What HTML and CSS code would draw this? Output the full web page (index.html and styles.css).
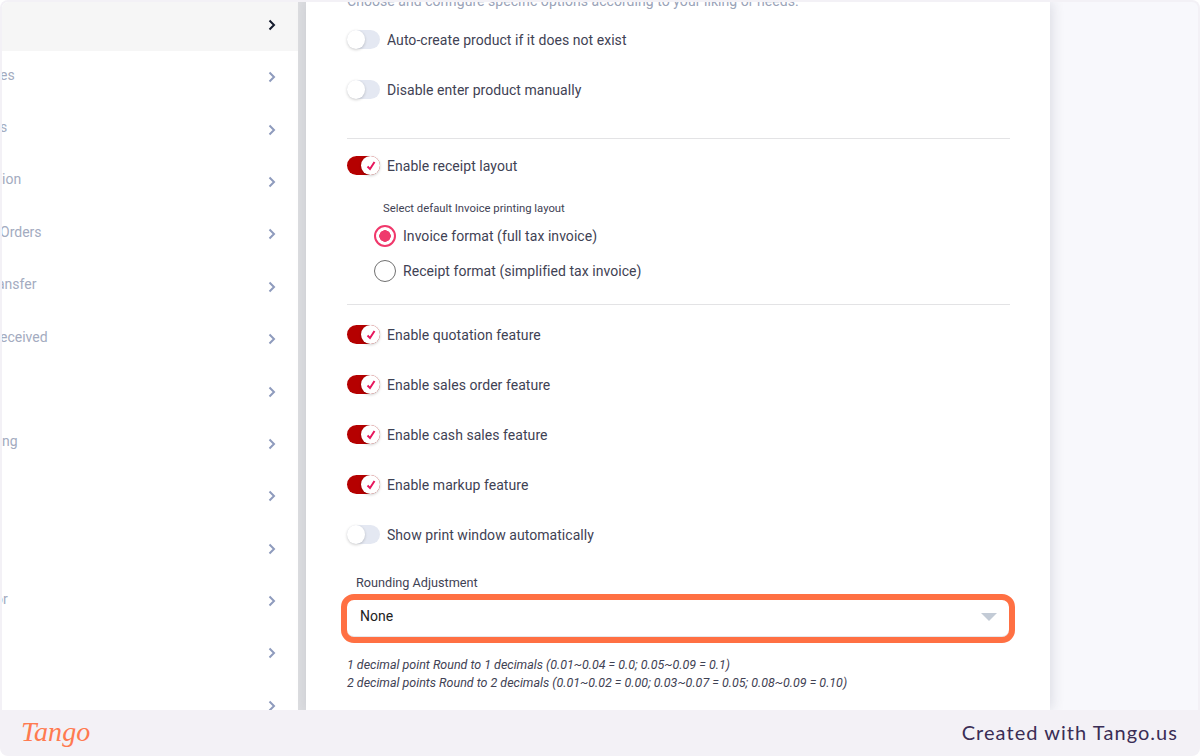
FILE: index.html
```html
<!DOCTYPE html>
<html lang="en">
<head>
<meta charset="utf-8">
<title>Settings</title>
<link rel="stylesheet" href="styles.css">
</head>
<body>
<div class="frame">
  <div class="shot">
    <aside class="sidebar">
      <div class="nav-row active"><span class="nav-label"></span><svg class="chev" viewBox="0 0 8 12"><path d="M1.5 1.5 6 6l-4.500 4.500"/></svg></div>
      <div class="nav-row"><span class="nav-label">es</span><svg class="chev" viewBox="0 0 8 12"><path d="M1.5 1.5 6 6l-4.500 4.500"/></svg></div>
      <div class="nav-row"><span class="nav-label">s</span><svg class="chev" viewBox="0 0 8 12"><path d="M1.5 1.5 6 6l-4.500 4.500"/></svg></div>
      <div class="nav-row"><span class="nav-label nudge-right">ion</span><svg class="chev" viewBox="0 0 8 12"><path d="M1.5 1.5 6 6l-4.500 4.500"/></svg></div>
      <div class="nav-row"><span class="nav-label">Orders</span><svg class="chev" viewBox="0 0 8 12"><path d="M1.5 1.5 6 6l-4.500 4.500"/></svg></div>
      <div class="nav-row"><span class="nav-label nudge-left">ansfer</span><svg class="chev" viewBox="0 0 8 12"><path d="M1.5 1.5 6 6l-4.500 4.500"/></svg></div>
      <div class="nav-row"><span class="nav-label">eceived</span><svg class="chev" viewBox="0 0 8 12"><path d="M1.5 1.5 6 6l-4.500 4.500"/></svg></div>
      <div class="nav-row"><span class="nav-label"></span><svg class="chev" viewBox="0 0 8 12"><path d="M1.5 1.5 6 6l-4.500 4.500"/></svg></div>
      <div class="nav-row"><span class="nav-label nudge-right">ng</span><svg class="chev" viewBox="0 0 8 12"><path d="M1.5 1.5 6 6l-4.500 4.500"/></svg></div>
      <div class="nav-row"><span class="nav-label"></span><svg class="chev" viewBox="0 0 8 12"><path d="M1.5 1.5 6 6l-4.500 4.500"/></svg></div>
      <div class="nav-row"><span class="nav-label"></span><svg class="chev" viewBox="0 0 8 12"><path d="M1.5 1.5 6 6l-4.500 4.500"/></svg></div>
      <div class="nav-row"><span class="nav-label nudge-far">or</span><svg class="chev" viewBox="0 0 8 12"><path d="M1.5 1.5 6 6l-4.500 4.500"/></svg></div>
      <div class="nav-row"><span class="nav-label"></span><svg class="chev" viewBox="0 0 8 12"><path d="M1.5 1.5 6 6l-4.500 4.500"/></svg></div>
      <div class="nav-row"><span class="nav-label"></span><svg class="chev" viewBox="0 0 8 12"><path d="M1.5 1.5 6 6l-4.500 4.500"/></svg></div>
    </aside>
    <div class="scrollbar"></div>
    <main class="card">
      <p class="intro">Choose and configure specific options according to your liking or needs.</p>
      <div class="opt first"><span class="toggle"></span><span>Auto-create product if it does not exist</span></div>
      <div class="opt"><span class="toggle"></span><span>Disable enter product manually</span></div>
      <hr class="rule rule-a">
      <div class="opt tight"><span class="toggle on"><span class="knob"><svg viewBox="0 0 12 12"><path d="M2.500 6.500 5 9l4.500-7"/></svg></span></span><span>Enable receipt layout</span></div>
      <div class="sub-label">Select default Invoice printing layout</div>
      <div class="radio-row"><span class="radio on"></span><span>Invoice format (full tax invoice)</span></div>
      <div class="radio-row"><span class="radio"></span><span>Receipt format (simplified tax invoice)</span></div>
      <hr class="rule rule-b">
      <div class="opt tight"><span class="toggle on"><span class="knob"><svg viewBox="0 0 12 12"><path d="M2.500 6.500 5 9l4.500-7"/></svg></span></span><span>Enable quotation feature</span></div>
      <div class="opt"><span class="toggle on"><span class="knob"><svg viewBox="0 0 12 12"><path d="M2.500 6.500 5 9l4.500-7"/></svg></span></span><span>Enable sales order feature</span></div>
      <div class="opt"><span class="toggle on"><span class="knob"><svg viewBox="0 0 12 12"><path d="M2.500 6.500 5 9l4.500-7"/></svg></span></span><span>Enable cash sales feature</span></div>
      <div class="opt"><span class="toggle on"><span class="knob"><svg viewBox="0 0 12 12"><path d="M2.500 6.500 5 9l4.500-7"/></svg></span></span><span>Enable markup feature</span></div>
      <div class="opt"><span class="toggle"></span><span>Show print window automatically</span></div>
      <div class="field-label">Rounding Adjustment</div>
      <div class="select"><span>None</span><span class="caret"></span></div>
      <p class="hint first-hint">1 decimal point Round to 1 decimals (0.01~0.04 = 0.0; 0.05~0.09 = 0.1)</p>
      <p class="hint">2 decimal points Round to 2 decimals (0.01~0.02 = 0.00; 0.03~0.07 = 0.05; 0.08~0.09 = 0.10)</p>
    </main>
    <div class="backdrop"></div>
  </div>
  <footer class="footer">
    <span class="logo">Tango</span>
    <span class="credit">Created with Tango.us</span>
  </footer>
</div>
</body>
</html>
```
FILE: styles.css
```css
* { box-sizing: border-box; }
html, body { margin: 0; height: 100%; background: #fff; overflow: hidden; }
body { font-family: Roboto, "Liberation Sans", sans-serif; font-size: 14px; letter-spacing: .05px; color: #3f4254; }
.frame { width: 1200px; height: 756px; background: #f3f1f6; border-radius: 8px; padding: 2px 2px 0; display: flex; flex-direction: column; overflow: hidden; }
.shot { height: 708px; display: flex; overflow: hidden; background: #f8f8fc; border-radius: 6px 6px 0 0; }

.sidebar { width: 296px; flex: none; background: #fff; overflow: hidden; }
.nav-row { height: 52.4px; display: flex; align-items: center; justify-content: space-between; padding-right: 22px; }
.nav-row.active { background: #f6f6f6; margin-top: -3px; height: 52px; }
.nav-label { color: #a3abc0; font-size: 14px; letter-spacing: 0; margin-bottom: 5px; margin-left: -2px; white-space: nowrap; }
.nudge-right { margin-left: 0; }
.nudge-left { margin-left: -5px; }
.nudge-far { margin-left: -7px; }
.chev { width: 8px; height: 12px; fill: none; stroke: #8e9bbd; stroke-width: 2; }
.active .chev { stroke: #141b2d; }

.scrollbar { width: 8px; flex: none; background: #dcdde0; }

.card { width: 744px; flex: none; background: #fff; padding: 0 40px 0 41px; box-shadow: 2px 0 12px rgba(40, 50, 80, .14); position: relative; overflow: hidden; }
.intro { margin: -8px 0 0; height: 14px; line-height: 14px; font-size: 14px; color: #9aa3b8; white-space: nowrap; }
.opt { height: 19px; margin-top: 31px; display: flex; align-items: center; gap: 7px; white-space: nowrap; }
.opt.first { margin-top: 22px; }
.opt.tight { margin-top: 0; }
.toggle { position: relative; display: block; width: 33px; height: 19px; border-radius: 10px; background: #e4e8f2; flex: none; }
.toggle::before { content: ""; position: absolute; left: 0; top: 0; width: 18px; height: 19px; border-radius: 50%; background: #fff; box-shadow: 0 1px 3px rgba(0, 0, 0, .2); }
.toggle.on { background: #b50000; }
.toggle.on::before { display: none; }
.knob { position: absolute; right: 0; top: 0; width: 19px; height: 19px; border-radius: 50%; background: #fff; box-shadow: 0 1px 3px rgba(0, 0, 0, .2); display: flex; align-items: center; justify-content: center; }
.knob svg { width: 12px; height: 12px; fill: none; stroke: #e8175d; stroke-width: 2; }

.rule { border: 0; height: 1px; background: #e3e3e5; margin: 0; }
.rule-a { margin-top: 39px; margin-bottom: 17px; }
.rule-b { margin-top: 22px; margin-bottom: 20px; }

.sub-label { margin: 27px 0 0 36px; height: 14px; line-height: 14px; font-size: 11.300px; letter-spacing: 0; }
.radio-row { height: 22px; margin: 13px 0 0 27px; display: flex; align-items: center; gap: 7px; white-space: nowrap; }
.sub-label + .radio-row { margin-top: 9px; }
.radio { width: 22px; height: 22px; border-radius: 50%; border: 1.500px solid #707070; flex: none; }
.radio.on { border: 2px solid #f0386b; background: radial-gradient(circle, #ef3a6c 0 5.500px, #fff 6px); }

.field-label { margin: 31px 0 0 9px; height: 16px; line-height: 16px; font-size: 12.700px; letter-spacing: 0; }
.select { margin: 3px 0 0 -6px; height: 49px; width: 674px; border: 6px solid #ff7043; border-radius: 13px; display: flex; align-items: center; justify-content: space-between; padding: 0 12px 5px 13px; color: #222; background: #fff; box-shadow: inset 0 -1px 0 #e6e8ec; }
.caret { width: 0; height: 0; margin-top: 2px; border-style: solid; border-width: 8px 8px 0; border-color: #c3cbd6 transparent transparent; }
.hint { margin: 0; height: 18px; line-height: 18px; font-size: 12.480px; letter-spacing: 0; font-style: italic; white-space: nowrap; }
.first-hint { margin-top: 13px; }

.backdrop { flex: 1; }

.footer { flex: 1; display: flex; align-items: center; justify-content: space-between; padding: 0 20px 2px 19px; }
.logo { font-family: "Liberation Serif", serif; font-style: italic; font-size: 28px; color: #ff7a50; font-weight: 400; }
.credit { font-family: Lato, sans-serif; font-size: 20px; letter-spacing: 1.050px; color: #3a2d55; }
```
